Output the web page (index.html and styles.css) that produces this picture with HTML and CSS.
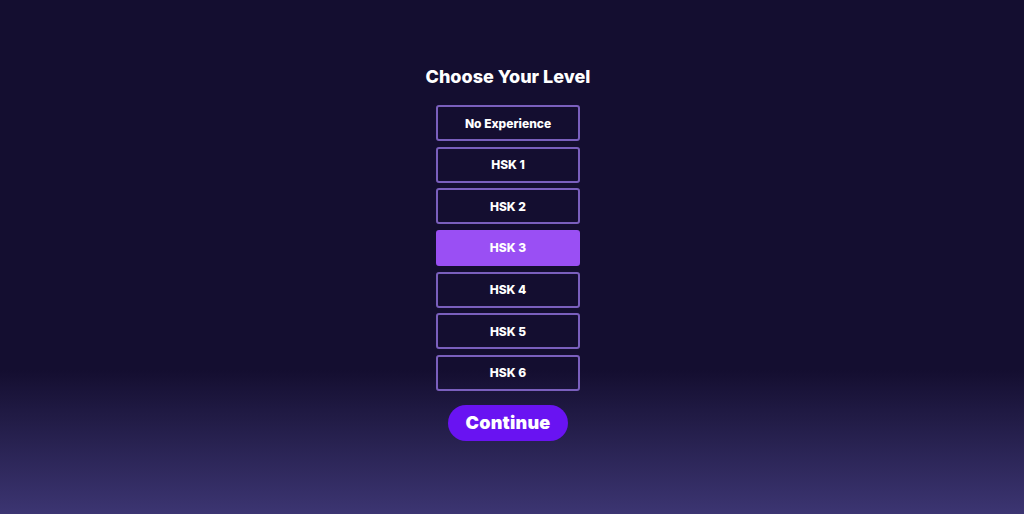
FILE: index.html
```html
<!DOCTYPE html>
<html>
<head>
<meta charset="utf-8">
<link rel="stylesheet" href="styles.css">
</head>
<body>
<main class="page">
  <h1 class="title">Choose Your Level</h1>
  <div class="levels">
    <button class="level">No Experience</button>
    <button class="level">HSK 1</button>
    <button class="level">HSK 2</button>
    <button class="level selected">HSK 3</button>
    <button class="level">HSK 4</button>
    <button class="level">HSK 5</button>
    <button class="level">HSK 6</button>
  </div>
  <button class="continue">Continue</button>
</main>
</body>
</html>
```
FILE: styles.css
```css
html, body {
  margin: 0;
  height: 100%;
}
body {
  background: linear-gradient(to bottom, #140e30 0%, #140e30 72%, #221c47 82%, #3c3572 100%);
  font-family: Inter, "Noto Sans", sans-serif;
  color: #fff;
}
.page {
  display: flex;
  flex-direction: column;
  align-items: center;
  padding-top: 66px;
  padding-right: 8px;
}
.title {
  margin: 0 0 17px;
  font-size: 18px;
  font-weight: 800;
  line-height: 22px;
  letter-spacing: 0;
}
.levels {
  display: flex;
  flex-direction: column;
  gap: 5.67px;
}
.level {
  box-sizing: border-box;
  width: 144px;
  height: 36px;
  border: 2px solid #7a5fbd;
  border-radius: 3px;
  background: transparent;
  color: #fff;
  font-family: inherit;
  font-size: 12px;
  font-weight: 800;
  padding: 0;
}
.level.selected {
  background: #9a4ff4;
  border-color: #9a4ff4;
}
.continue {
  margin-top: 14px;
  width: 120px;
  height: 36px;
  border: none;
  border-radius: 18px;
  background: #6913f2;
  color: #fff;
  font-family: inherit;
  font-size: 18px;
  font-weight: 900;
  letter-spacing: 0.2px;
  padding: 0;
}
```
